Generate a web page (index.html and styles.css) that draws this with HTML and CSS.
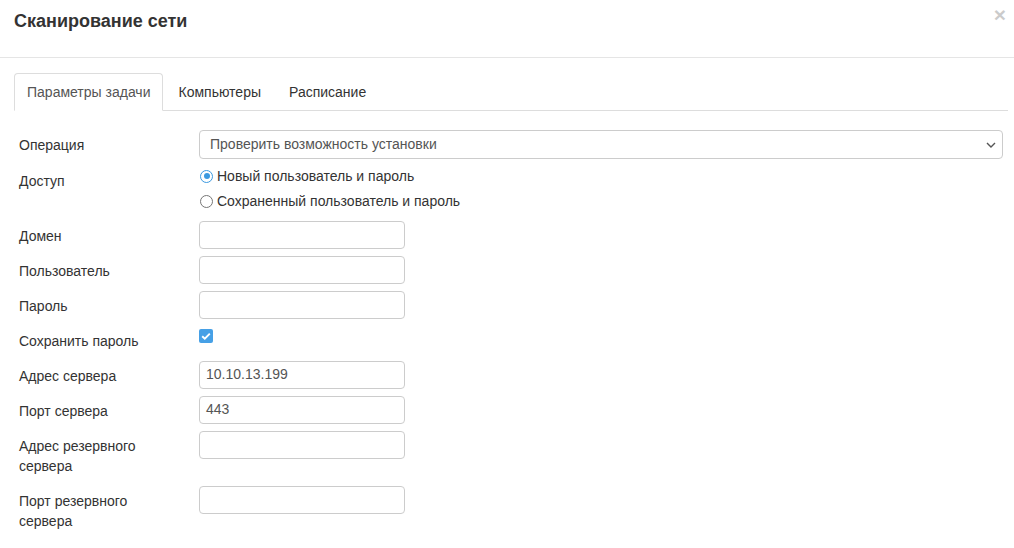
FILE: index.html
```html
<!DOCTYPE html>
<html lang="ru">
<head>
<meta charset="utf-8">
<title>Сканирование сети</title>
<link rel="stylesheet" href="styles.css">
</head>
<body>
<div class="modal">
  <div class="modal-header">
    <h4 class="modal-title">Сканирование сети</h4>
    <span class="close">×</span>
  </div>
  <div class="modal-body">
    <ul class="nav-tabs">
      <li class="tab active"><span>Параметры задачи</span></li>
      <li class="tab"><span>Компьютеры</span></li>
      <li class="tab"><span>Расписание</span></li>
    </ul>
    <div class="form">
      <div class="row">
        <div class="label">Операция</div>
        <div class="control">
          <div class="select">
            <span>Проверить возможность установки</span>
            <svg class="chev" width="10" height="6" viewBox="0 0 10 6"><path d="M1 1 L5 5 L9 1" fill="none" stroke="#555" stroke-width="1.4"/></svg>
          </div>
        </div>
      </div>
      <div class="row">
        <div class="label">Доступ</div>
        <div class="control radios">
          <div class="radio-line"><span class="radio checked"></span>Новый пользователь и пароль</div>
          <div class="radio-line"><span class="radio"></span>Сохраненный пользователь и пароль</div>
        </div>
      </div>
      <div class="row">
        <div class="label">Домен</div>
        <div class="control"><div class="input"></div></div>
      </div>
      <div class="row">
        <div class="label">Пользователь</div>
        <div class="control"><div class="input"></div></div>
      </div>
      <div class="row">
        <div class="label">Пароль</div>
        <div class="control"><div class="input"></div></div>
      </div>
      <div class="row">
        <div class="label">Сохранить пароль</div>
        <div class="control check-wrap">
          <span class="checkbox"><svg width="14" height="14" viewBox="0 0 14 14"><path d="M3.2 7.2 L5.8 9.7 L10.8 4.6" fill="none" stroke="#fff" stroke-width="1.9"/></svg></span>
        </div>
      </div>
      <div class="row">
        <div class="label">Адрес сервера</div>
        <div class="control"><div class="input">10.10.13.199</div></div>
      </div>
      <div class="row">
        <div class="label">Порт сервера</div>
        <div class="control"><div class="input">443</div></div>
      </div>
      <div class="row">
        <div class="label">Адрес резервного сервера</div>
        <div class="control"><div class="input"></div></div>
      </div>
      <div class="row">
        <div class="label">Порт резервного сервера</div>
        <div class="control"><div class="input"></div></div>
      </div>
    </div>
  </div>
</div>
</body>
</html>
```
FILE: styles.css
```css
* { box-sizing: border-box; }
html, body { margin: 0; padding: 0; background: #fff; }
body {
  font-family: "Liberation Sans", Arial, sans-serif;
  font-size: 14px;
  line-height: 20px;
  color: #333;
}
.modal { position: relative; }
.modal-header {
  height: 58px;
  padding: 8px 14px 0;
  border-bottom: 1px solid #e5e5e5;
}
.modal-title {
  margin: 0;
  font-size: 18px;
  font-weight: bold;
  line-height: 26px;
  color: #333;
}
.close {
  position: absolute;
  top: 4px;
  right: 8px;
  font-size: 21px;
  font-weight: bold;
  line-height: 21px;
  color: #000;
  opacity: 0.2;
}
.modal-body { padding: 15px 6px 0 14px; }
.nav-tabs {
  list-style: none;
  margin: 0;
  padding: 0;
  display: flex;
  border-bottom: 1px solid #ddd;
}
.tab {
  margin: 0 2px -1px 0;
  padding: 8px 12px;
  border: 1px solid transparent;
  border-radius: 4px 4px 0 0;
  line-height: 20px;
  color: #333;
}
.tab.active {
  color: #555;
  background: #fff;
  border-color: #ddd #ddd transparent;
}
.form { padding: 19px 5px 0; }
.row {
  display: flex;
  margin-bottom: 7px;
}
.label {
  flex: 0 0 180px;
  padding: 5px 30px 3px 0;
  line-height: 20px;
}
.control { flex: 1 1 auto; }
.select {
  position: relative;
  height: 29px;
  border: 1px solid #ccc;
  border-radius: 4px;
  padding: 3px 10px;
  color: #555;
  line-height: 20px;
}
.chev { position: absolute; right: 6px; top: 11px; }
.input {
  width: 206px;
  height: 28px;
  border: 1px solid #ccc;
  border-radius: 4px;
  padding: 2px 6px;
  color: #555;
  line-height: 20px;
}
.radios { padding-bottom: 3px; }
.radio-line {
  display: flex;
  align-items: center;
  height: 20px;
  margin-bottom: 5px;
}
.radio-line:last-child { margin-bottom: 0; }
.radio {
  width: 13px;
  height: 13px;
  margin: 0 4px 0 1px;
  border: 1.5px solid #767676;
  border-radius: 50%;
  display: inline-flex;
  align-items: center;
  justify-content: center;
  flex: none;
}
.radio.checked { border-color: #3b99e0; }
.radio.checked::after {
  content: "";
  width: 6px;
  height: 6px;
  border-radius: 50%;
  background: #3b99e0;
}
.check-wrap { height: 28px; padding-top: 3px; }
.checkbox {
  display: block;
  width: 14px;
  height: 14px;
  margin-left: 0;
  border-radius: 2px;
  background: #46a0e6;
}
.checkbox svg { display: block; }
```
